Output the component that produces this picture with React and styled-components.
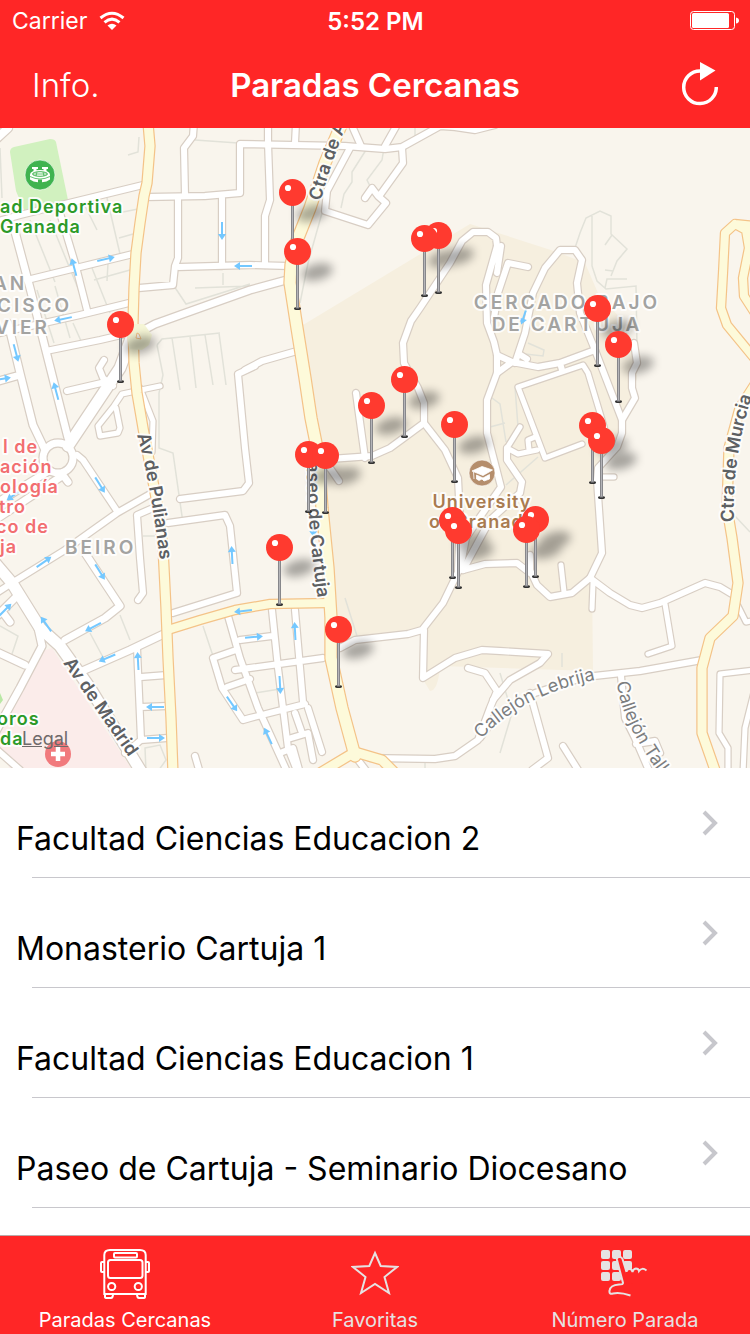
import React from "react";
import styled, { createGlobalStyle } from "styled-components";

const colors = {
  red: "#ff2626",
  pin: "#ff3a2f",
  land: "#f9f5ed",
  campus: "#f6efdf",
  hospital: "#fbecea",
  road: "#ffffff",
  road_edge: "#d8cec4",
  avenue: "#fdfada",
  avenue_edge: "#f4c388",
  path: "#e2e2d9",
  arrow: "#74c8ff",
  separator: "#c8c7cc",
};

const font_size = {
  title: "33px",
  row: "32px",
  status: "24px",
  carrier: "23px",
  tab: "20px",
};

const GlobalStyle = createGlobalStyle`
  * {
    box-sizing: border-box;
  }

  body {
    margin: 0;
    background: #fff;
    font-family: Inter, "Liberation Sans", sans-serif;
  }
`;

const Screen = styled.div`
  display: flex;
  flex-direction: column;
  min-height: 100vh;
`;

const Header = styled.header`
  background: ${colors.red};
  color: #fff;
`;

const StatusBar = styled.div`
  display: grid;
  grid-template-columns: 1fr auto 1fr;
  align-items: center;
  height: 42px;
  padding: 0 11px 0 12px;
  font-size: ${font_size.status};
`;

const Carrier = styled.div`
  display: flex;
  align-items: center;
  gap: 12px;
  font-size: ${font_size.carrier};
`;

const Clock = styled.time`
  font-weight: 600;
`;

const Battery = styled.div`
  display: flex;
  justify-content: flex-end;
`;

const NavBar = styled.div`
  display: grid;
  grid-template-columns: 1fr auto 1fr;
  align-items: center;
  height: 86px;
  padding: 0 30px;
`;

const NavTitle = styled.h1`
  margin: 0;
  font-size: ${font_size.title};
  font-weight: 600;
`;

const NavButton = styled.button`
  display: flex;
  justify-self: ${props => props.$side};
  padding: 0 2px;
  border: 0;
  background: none;
  color: inherit;
  font-family: inherit;
  font-size: ${font_size.title};
  font-weight: 300;
`;

const MapArea = styled.section`
  position: relative;
  background: ${colors.land};
`;

const MapDrawing = styled.svg`
  display: block;
  width: 100%;
  height: auto;
`;

const MapText = styled.text`
  font-size: 18px;
  font-weight: 600;
  letter-spacing: 1px;
  fill: ${props => props.$color};
  paint-order: stroke;
  stroke: rgba(255, 255, 255, 0.85);
  stroke-width: 4px;
  stroke-linejoin: round;
`;

const DistrictText = styled(MapText)`
  font-size: 19px;
  letter-spacing: 3px;
  fill: #a3a3a1;
`;

const StreetText = styled(MapText)`
  font-size: 18px;
  font-weight: ${props => (props.$minor ? 400 : 600)};
  letter-spacing: 0;
  fill: ${props => (props.$minor ? "#7c7e80" : "#5d6063")};
`;

const LegalLink = styled.a`
  position: absolute;
  left: 22px;
  bottom: 18px;
  color: #6f6a6a;
  font-size: 18px;
  line-height: 22px;
`;

const StopList = styled.ul`
  flex: 1;
  margin: 0;
  padding: 0;
  list-style: none;
`;

const StopRow = styled.a`
  display: flex;
  justify-content: space-between;
  height: 110px;
  padding: 0 32px 0 16px;
  color: #000;
  font-size: ${font_size.row};
  line-height: 40px;
  text-decoration: none;
  background: linear-gradient(${colors.separator}, ${colors.separator}) 32px 100% / 100% 1px no-repeat;
`;

const StopName = styled.span`
  padding-top: 51px;
`;

const Chevron = styled.svg`
  flex: none;
  margin-top: 41px;
`;

const TabBar = styled.nav`
  position: sticky;
  bottom: 0;
  display: grid;
  grid-template-columns: repeat(3, 1fr);
  height: 99px;
  border-top: 1px solid #b9a9a9;
  background: ${colors.red};
`;

const Tab = styled.button`
  display: flex;
  flex-direction: column;
  align-items: center;
  gap: 7px;
  padding: 13px 0 0;
  border: 0;
  background: none;
  color: ${props => (props.$active ? "#fff" : "#e6e2e2")};
  font-family: inherit;
  font-size: ${font_size.tab};
  line-height: 28px;
`;

const paths = [
  "M0 20L2 70M139 9l-1 15-10 3M195 12l43 3",
  "M30 92l25 62M50 92l32 78M85 78l12 24M107 70l13 56M118 85l20-4M119 110l14-4",
  "M92 140l18 45M108 135l-1 18M94 152l36-10M37 162l17 53M55 158l15 52M73 195l8 18",
  "M223 145v12M195 160l55-2M174 158l12 18 64-20",
  "M157 217l5-6 58-6M172 210l8 52M190 208l6 52M205 207l8 50M219 205l7 52M157 217l6 30-4 18 0 55 14 5 10 70",
  "M366 22l-14 22 0 10-8 12-3 14M384 20l-2 12-15 20 5 10M322 85l-14 50-8 40M415 0v8",
  "M575 120l5-15 6-15 14-7 11 5v18l16 15-10 12-6 15M612 107l-7 10M592 88v50l5 15 9 8 30-3 1 60M605 160l2-9h20M605 142l8 1",
  "M528 215l16 7-1 6-18-2M515 259l3 40M492 270l8 6 6 38M490 299l15-4M538 329l-32 28",
  "M0 498l18 10-6 18M90 505l15 28M120 487l10 25M143 408h12M203 498l10 30",
  "M345 470l12 38M562 525v14M425 640v-8M500 545l12 40-12 40M255 565l25-4M735 388l15 16",
  "M145 620l15-3 6 15-10 14-10-3z",
];

const roads = [
  { d: "M-5 94L20 87L65 76L143 57", w: 6 },
  { d: "M-5 12L8 0", w: 8 },
  { d: "M147 69L205 68L240 65L240 16L345 18L385 21L402 19L440 -2L455 -1L475 2L495 -3", w: 6 },
  { d: "M194 -5L193 8L184 20L185 67M178 70L178 130L175 138L173 157L139 160M222 70V138M179 139L250 137L288 138", w: 6 },
  { d: "M296 -5L295 15M268 -5L268 15L270 72L265 88L265 137", w: 6 },
  { d: "M128 222L140 204L155 196L180 187L250 162L290 151", w: 7 },
  { d: "M27 152L80 139L133 126M-5 206L80 187L133 174M46 223L100 212L130 205M60 85L75 135L87 182", w: 6 },
  { d: "M14 100L30 160L46 223L68 310M8 195L20 245L33 297L45 322M-5 254L20 247", w: 7 },
  { d: "M133 205L120 240L90 285L68 318", w: 11 },
  { d: "M67 263L110 253M104 232L99 240L103 250L113 258", w: 6 },
  { d: "M160 258L122 266L114 278L98 298L100 308L118 305L120 300L116 280M140 260L153 293L152 324", w: 5 },
  { d: "M43 330A15 15 0 1 0 73 330A15 15 0 1 0 43 330M62 346L68 354", w: 7 },
  { d: "M255 238L238 246L245 320L249 355L243 363L180 371", w: 6 },
  { d: "M350 20L327 63L325 83L368 97L386 75L378 68L372 60L365 70M380 67L403 35L402 20M353 0L361 18M398 -5L385 18", w: 6 },
  { d: "M245 242L262 233L297 223", w: 6 },
  { d: "M497 118L496 110L488 104L473 104L462 113L450 135L420 180L411 193L403 215L404 235L418 260L424 275L424 295L405 309L390 320L372 328L330 331", w: 6 },
  { d: "M424 295L445 322L458 350L460 390L458 442M356 265L365 330M330 340L339 353", w: 6 },
  { d: "M497 118L486 157L487 195L494 214L497 227L497 245L487 272L487 305L501 359L480 389L466 410L460 442M501 118L497 145", w: 6 },
  { d: "M528 139L508 135L498 165L494 190M507 320L507 332L522 354L520 365L490 392L463 442", w: 6 },
  { d: "M515 235L525 205L533 165L545 140L560 122L575 122L582 132L577 155L580 185L595 222L622 292L622 305L617 319L598 340L597 352L602 425L590 450L572 465L550 469L537 457L530 442L530 427", w: 6 },
  { d: "M497 227L512 234L538 239L560 235L595 222M512 234L497 245M560 235L562 242M519 226L527 231", w: 6 },
  { d: "M634 215L637 235L632 245L632 260L635 270L622 292", w: 6 },
  { d: "M606 305L588 245L583 237L518 259L545 330L582 316M520 299L507 320L518 326L537 322M535 309L528 312L529 322", w: 5 },
  { d: "M602 349L614 349M561 437L564 464M593 455L592 481M665 476L672 518L648 526", w: 5 },
  { d: "M460 440L443 475L422 502L408 506L355 512L340 520M424 502L423 550L455 530L482 522L500 523L548 526L540 535L510 552L493 572", w: 6 },
  { d: "M463 442L485 436L517 435L530 445M590 450L610 465L630 477L642 480L660 475L705 455L720 459L735 468", w: 6 },
  { d: "M468 540L485 545L497 563L490 580L478 612L455 628L435 631L370 630M480 610L495 590L535 565L585 549L640 543L702 532", w: 6 },
  { d: "M530 565L548 630L532 642M563 618L580 645M621 548L625 590L635 610L650 645M636 616L655 613L660 625L645 632", w: 6 },
  { d: "M-5 466L15 453L65 422L117 385L152 365M77 327L83 332L117 383M168 395L225 387L230 398L237 465L173 485M153 380L137 387L140 430L143 465L138 472", w: 6 },
  { d: "M-5 435L12 455L40 500L60 518L90 560L142 645", w: 11 },
  { d: "M85 425L120 478L105 490L65 512M38 500L42 518L20 560L-5 605M-5 523L25 537M-5 490L15 470M4 486L10 494", w: 7 },
  { d: "M-5 392L62 348M-5 376L47 344M80 544L130 522L168 504", w: 7 },
  { d: "M137 520L141 612L125 625M141 549L167 547M141 579L167 578M141 612L167 610", w: 6 },
  { d: "M228 488L240 530L258 580L290 650M213 530L236 522M213 530L222 560L243 592L250 590L305 576M240 512L272 508M227 559L250 551M235 542L323 530M272 482L278 540L288 620L298 645M295 482L303 574", w: 6 },
  { d: "M308 580L322 624M295 585L302 605M288 611L308 605L313 632M280 625L293 620L300 645M195 628L200 645M358 632L368 645M-5 620L20 642", w: 6 },
  { d: "M755 542L720 546L719 605L728 620L728 645M755 560L745 600L743 645M738 478L746 494L756 492", w: 5 },
];

const avenues = [
  { d: "M148 -5L150 18L147 55L144 68L140 95L136 125L134 160L133 195L134 235L137 265L143 300L157 375L163 420L166 480L168 530L171 590L173 645", w: 9 },
  { d: "M342 -5L325 35L310 80L296 115L291 137L290 155L297 200L305 250L311 290L318 325L322 380L328 440L331 490L331 530L342 580L355 628", w: 11 },
  { d: "M171 501L200 492L235 482L270 476L328 475", w: 8 },
  { d: "M320 645L355 624L382 632L396 646", w: 9 },
  { d: "M755 98L735 96L725 105L723 145L721 180L727 197L755 231M735 96L746 102L749 120L743 150L744 168L755 185", w: 8 },
  { d: "M758 252L740 280L729 320L727 380L732 410L738 455L733 488L710 510L702 540L702 605L716 645", w: 9 },
];

// x, y of the middle and heading in degrees
const arrows = [
  [222, 103, 90], [243, 138, 180], [106, 131, -13], [74, 139, -105], [63, 191, 168],
  [16, 225, 75], [56, 263, -105], [2, 251, -10], [14, 367, 145], [100, 357, 58],
  [44, 434, -35], [100, 444, 58], [232, 427, -93], [93, 499, 152], [5, 482, -45],
  [46, 496, -125], [107, 530, 157], [138, 533, -93], [155, 579, 180], [156, 610, 0],
  [243, 483, 173], [254, 509, -5], [295, 503, -93], [280, 557, 87], [232, 576, 55],
  [268, 608, -115], [524, 188, 108], [313, 400, 85],
];

const pins = [
  [292, 64], [297, 123], [438, 107], [424, 110], [597, 180], [618, 216], [120, 196],
  [404, 251], [371, 277], [454, 296], [592, 297], [601, 312], [308, 326], [325, 327],
  [452, 392], [458, 402], [535, 391], [526, 401], [279, 419], [338, 501],
];

const stops = [
  "Facultad Ciencias Educacion 2",
  "Monasterio Cartuja 1",
  "Facultad Ciencias Educacion 1",
  "Paseo de Cartuja - Seminario Diocesano",
];

function RoadLayer({ items, fill, edge }) {
  return (
    <g fill="none" strokeLinejoin="round" strokeLinecap="round">
      {items.map(r => <path key={r.d} d={r.d} stroke={edge} strokeWidth={r.w + 2.4} />)}
      {items.map(r => <path key={r.d} d={r.d} stroke={fill} strokeWidth={r.w} />)}
    </g>
  );
}

function Pin({ x, y }) {
  return (
    <g transform={`translate(${x + 0.5} ${y + 0.5})`}>
      <ellipse cx="0" cy="57" rx="3.500" ry="1.500" fill="#333" />
      <path d="M0 10V57" stroke="#87878b" strokeWidth="3" />
      <path d="M0 10V56" stroke="#b5b5b9" strokeWidth="1" />
      <circle r="13.500" fill={colors.pin} />
      <circle cx="-4.500" cy="-4.500" r="3.100" fill="#fff" />
    </g>
  );
}

function StopsMap() {
  return (
    <MapDrawing viewBox="0 0 750 640" role="img" aria-label="Mapa de paradas cercanas">
      <defs>
        <filter id="soft" x="-50%" y="-80%" width="200%" height="260%">
          <feGaussianBlur stdDeviation="5" />
        </filter>
        <path id="ctra-a" d="M321 73Q329 40 352 -18" />
        <path id="pulianas" d="M137 307Q150 350 161 440" />
        <path id="cartuja" d="M307 323Q306 400 321 490" />
        <path id="madrid" d="M63 535L138 642" />
        <path id="murcia" d="M734 394Q731 325 758 250" />
        <path id="lebrija" d="M481 611Q525 565 600 551" />
        <path id="tallo" d="M617 554Q621 600 675 665" />
      </defs>

      <rect width="750" height="640" fill={colors.land} />
      <path d="M303 197L470 96L557 124L585 135L598 165L620 190L634 220L637 250L622 300L603 330L600 430L592 450L593 543L440 538Q438 563 430 563L422 550L423 503L345 515L337 500L322 320L310 290Z" fill={colors.campus} />
      <path d="M42 523L52 520L134 645H12L0 620V604Z" fill={colors.hospital} />
      <path d="M10 24Q10 20 14 19L50 11Q55 11 56 14L68 72L24 82L16 63Z" fill="#d1f1bf" />
      <path d="M0 565L3 572L0 576Z" fill="#b9e8a5" />

      <g fill="none" stroke={colors.path} strokeWidth="1.500">
        {paths.map(d => <path key={d} d={d} />)}
      </g>
      <RoadLayer items={roads} fill={colors.road} edge={colors.road_edge} />
      <RoadLayer items={avenues} fill={colors.avenue} edge={colors.avenue_edge} />
      <path d="M127 205L130 196H144L152 207L149 217L142 222L129 221Z" fill="#f5f5d5" />
      <path d="M137 205L139 206L141 211L136 210Z" fill={colors.land} stroke={colors.avenue_edge} />

      <g fill="none" stroke={colors.arrow} strokeWidth="2">
        {arrows.map(([x, y, angle]) => (
          <g key={`${x}-${y}`} transform={`translate(${x} ${y}) rotate(${angle})`}>
            <path d="M-9 0H6" />
            <path d="M3 -4L9 0L3 4Z" fill={colors.arrow} stroke="none" />
          </g>
        ))}
      </g>

      <circle cx="40" cy="47" r="15" fill="#3fb34f" stroke="#fff" strokeOpacity=".6" />
      <path d="M32 39h6v2h-1.500v2h-3v-2H32zM42 39h6v2h-1.500v2h-3v-2H42z" fill="#fff" />
      <ellipse cx="40" cy="46.500" rx="10" ry="4.500" fill="#fff" />
      <path d="M30 47v4.500Q33 54 38 54.200V51.500H42V54.200Q47 54 50 51.500V47Z" fill="#fff" />
      <g fill="none" stroke="#3fb34f">
        <ellipse cx="40" cy="46" rx="7.500" ry="2.300" />
        <path d="M33 46h14M30 48.500Q40 53.500 50 48.500M37 44l-1 4M43 44l1 4" strokeWidth=".8" />
      </g>
      <circle cx="58" cy="626" r="13" fill="#f17a7d" />
      <path d="M58 619V633M51 626H65" stroke="#fff" strokeWidth="4.500" />
      <circle cx="482" cy="345" r="13" fill="#b58e6c" stroke="#fff" strokeOpacity=".6" />
      <path d="M472 343L482 338.500L492.500 342L483 347.500ZM476.500 347L483 350L489.500 346.500V351L484 353L482 351L479 352.500L476.500 351ZM473.500 344L474 351" fill="#fff" stroke="#fff" strokeWidth=".8" />

      <MapText x="0" y="85" $color="#2c9a28">ad Deportiva</MapText>
      <MapText x="0" y="105" $color="#2c9a28">Granada</MapText>
      <DistrictText x="-7" y="162">AN</DistrictText>
      <DistrictText x="-3" y="184">CISCO</DistrictText>
      <DistrictText x="-5" y="206">VIER</DistrictText>
      <DistrictText x="65" y="426">BEIRO</DistrictText>
      <DistrictText x="567" y="181" textAnchor="middle">CERCADO BAJO</DistrictText>
      <DistrictText x="567" y="203" textAnchor="middle">DE CARTUJA</DistrictText>
      <g>
        <MapText x="3" y="325" $color="#f26e70">l de</MapText>
        <MapText x="0" y="345" $color="#f26e70">ación</MapText>
        <MapText x="0" y="365" $color="#f26e70">ología</MapText>
        <MapText x="-1" y="385" $color="#f26e70">tro</MapText>
        <MapText x="-4" y="405" $color="#f26e70">co de</MapText>
        <MapText x="0" y="425" $color="#f26e70">ja</MapText>
      </g>
      <MapText x="-3" y="597" $color="#2c9a28">oros</MapText>
      <MapText x="0" y="617" $color="#2c9a28">da</MapText>
      <MapText x="482" y="380" textAnchor="middle" $color="#a97b50">University</MapText>
      <MapText x="482" y="400" textAnchor="middle" $color="#a97b50">of Granada</MapText>

      <StreetText><textPath href="#ctra-a">Ctra de A</textPath></StreetText>
      <StreetText><textPath href="#pulianas">Av de Pulianas</textPath></StreetText>
      <StreetText><textPath href="#cartuja">Paseo de Cartuja</textPath></StreetText>
      <StreetText><textPath href="#madrid">Av de Madrid</textPath></StreetText>
      <StreetText><textPath href="#murcia">Ctra de Murcia</textPath></StreetText>
      <StreetText $minor><textPath href="#lebrija">Callejón Lebrija</textPath></StreetText>
      <StreetText $minor><textPath href="#tallo">Callejón Talló</textPath></StreetText>

      <g fill="#000" opacity=".34" filter="url(#soft)">
        {pins.map(([x, y]) => (
          <ellipse key={`${x}-${y}`} cx={x + 20} cy={y + 21} rx="16" ry="8" transform={`rotate(-14 ${x + 20} ${y + 21})`} />
        ))}
      </g>
      {pins.map(([x, y]) => <Pin key={`${x}-${y}`} x={x} y={y} />)}
    </MapDrawing>
  );
}

function WifiIcon() {
  return (
    <svg width="26" height="20" viewBox="0 0 26 20" fill="none" stroke="#fff" strokeWidth="3">
      <path d="M1.500 7Q13 -2.500 24.500 7" />
      <path d="M5.500 11.300Q13 5 20.500 11.300" />
      <path d="M8.500 14.500Q13 11 17.500 14.500L13 19Z" fill="#fff" stroke="none" />
    </svg>
  );
}

function BatteryIcon() {
  return (
    <svg width="49" height="20" viewBox="0 0 49 20" fill="#fff">
      <rect x=".5" y=".5" width="44" height="18" rx="3" fill="none" stroke="#fff" />
      <rect x="2" y="2" width="37" height="15" rx="1.500" />
      <path d="M46 6.500Q49 7 49 9.500T46 12.500Z" />
    </svg>
  );
}

function RefreshIcon() {
  return (
    <svg width="38" height="46" viewBox="0 0 38 46" fill="none">
      <path d="M20 9A16.300 16.300 0 1 0 36.300 25" stroke="#fff" strokeWidth="3.500" />
      <path d="M20 0L35.500 8.500L20 18.500Z" fill="#fff" />
    </svg>
  );
}

function BusIcon() {
  return (
    <svg width="50" height="50" viewBox="0 0 50 50" fill="none" stroke="currentColor" strokeWidth="2">
      <path d="M4.300 45V6Q4.300 1 10 1H40Q45.700 1 45.700 6V45Z" />
      <rect x="14" y="4" width="23" height="4.500" rx="1" />
      <rect x="8" y="11" width="34.500" height="18" rx="2.500" />
      <circle cx="11.700" cy="37.500" r="3.600" />
      <circle cx="38.300" cy="37.500" r="3.600" />
      <path d="M4 13H2Q1 13 1 14V22Q1 23 2 23H4M46 13H48Q49 13 49 14V22Q49 23 48 23H46" />
      <path d="M5 45V48Q5 49 7 49H11Q13 49 13 45M45 45V48Q45 49 43 49H39Q37 49 37 45" />
    </svg>
  );
}

function StarIcon() {
  return (
    <svg width="48" height="50" viewBox="-1 0 48 50" fill="none" stroke="currentColor" strokeWidth="2">
      <path d="M23 4L28.700 17L45 18L32.500 28L37 44L23 35L9 44L13.500 28L1 18L17.300 17Z" />
    </svg>
  );
}

function KeypadIcon() {
  const keys = [[1, 1], [12, 1], [23, 1], [1, 12], [12, 12], [23, 12], [1, 23], [12, 23]];
  return (
    <svg width="50" height="50" viewBox="0 0 50 50">
      {keys.map(([x, y]) => (
        <rect key={`${x}-${y}`} x={x} y={y} width="9" height="9" rx="2" fill="currentColor" />
      ))}
      <path d="M22.500 35L17 11Q16.500 8.500 19 8Q21.500 7.500 22.500 10L26.500 23L33 26V34Z" fill={colors.red} />
      <path
        d="M26.500 23L22.500 10Q21.500 7.500 19 8Q16.500 8.500 17 11L23 34Q23 35.500 19 35.500Q10 36 9.500 42Q9 45.500 13 44.500Q20 43 30.500 46.500M26.500 23Q26.500 20 29.500 20Q32 20 32.500 23Q33 20 36 19.500Q38.500 19.500 39 22Q42 18 46.500 21.500"
        fill="none"
        stroke="currentColor"
        strokeWidth="2"
      />
    </svg>
  );
}

export default function App() {
  return (
    <Screen>
      <GlobalStyle />
      <Header>
        <StatusBar>
          <Carrier>
            Carrier
            <WifiIcon />
          </Carrier>
          <Clock>5:52 PM</Clock>
          <Battery>
            <BatteryIcon />
          </Battery>
        </StatusBar>
        <NavBar>
          <NavButton type="button" $side="start">Info.</NavButton>
          <NavTitle>Paradas Cercanas</NavTitle>
          <NavButton type="button" $side="end" aria-label="Actualizar">
            <RefreshIcon />
          </NavButton>
        </NavBar>
      </Header>
      <MapArea>
        <StopsMap />
        <LegalLink href="#legal">Legal</LegalLink>
      </MapArea>
      <StopList>
        {stops.map(name => (
          <li key={name}>
            <StopRow href="#parada">
              <StopName>{name}</StopName>
              <Chevron width="16" height="28" viewBox="0 0 16 28" fill="none" stroke="#c7c7cc" strokeWidth="4">
                <path d="M2 3L13 14L2 25" />
              </Chevron>
            </StopRow>
          </li>
        ))}
      </StopList>
      <TabBar>
        <Tab type="button" $active>
          <BusIcon />
          Paradas Cercanas
        </Tab>
        <Tab type="button">
          <StarIcon />
          Favoritas
        </Tab>
        <Tab type="button">
          <KeypadIcon />
          Número Parada
        </Tab>
      </TabBar>
    </Screen>
  );
}
